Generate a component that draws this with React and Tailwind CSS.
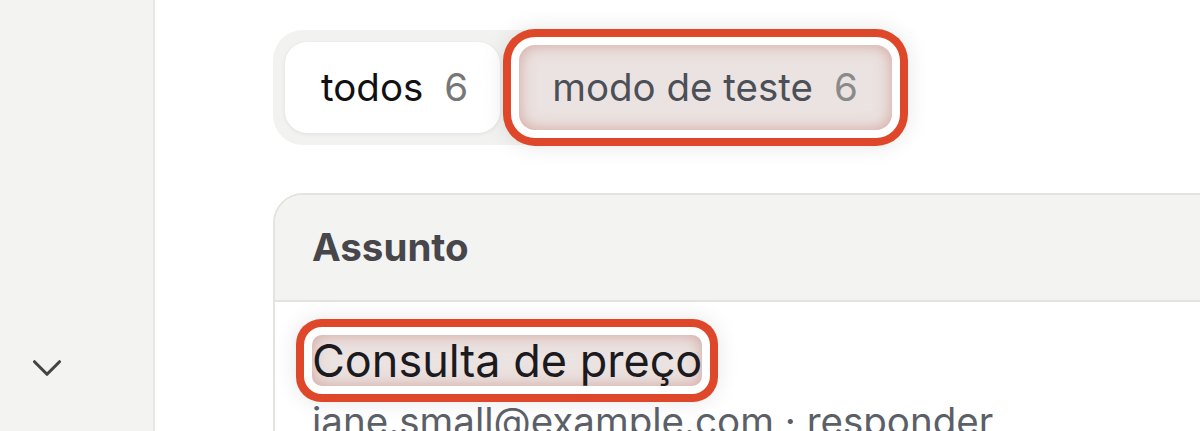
import { ChevronDown } from 'lucide-react';

const font = { fontFamily: 'Inter, "Noto Sans", sans-serif' };

// annotation look: white gap, red ring, soft outer shadow, reddish inner glow
const mark =
  'bg-[#ebe3e1] shadow-[inset_0_0_16px_rgba(185,100,90,0.5),0_0_0_8px_#ffffff,0_0_0_16px_#df472a,0_0_22px_16px_rgba(0,0,0,0.10)]';

function Sidebar() {
  return (
    <aside className="w-[155px] shrink-0 bg-[#f3f3f1] border-r-2 border-[#e6e6e3] flex flex-col">
      <div className="mt-auto mb-[38px] pl-[22px]">
        <ChevronDown className="w-[50px] h-[50px] text-[#444]" strokeWidth={1.5} />
      </div>
    </aside>
  );
}

function Tabs() {
  return (
    <div className="inline-flex items-center gap-[19px] p-3 rounded-[30px] bg-[#f2f2f0]">
      <button className="h-[91px] pl-[36px] pr-[32px] rounded-[22px] bg-white shadow-[0_1px_4px_rgba(0,0,0,0.08)] flex items-center gap-[21px] text-[38.5px]">
        <span className="text-[#111]">todos</span>
        <span className="text-[#777]">6</span>
      </button>
      <button className={`h-[85px] pl-[33px] pr-[34px] rounded-[16px] flex items-center gap-[21px] text-[38.5px] ${mark}`}>
        <span className="text-[#4b5058]">modo de teste</span>
        <span className="text-[#8a8a8a]">6</span>
      </button>
    </div>
  );
}

export default function App() {
  return (
    <div className="w-[1200px] h-[431px] overflow-hidden flex bg-white" style={font}>
      <Sidebar />
      <main className="flex-1 pl-[118px] pt-[30px] min-w-0">
        <Tabs />
        <div className="mt-[48px] w-[1000px] rounded-tl-[30px] border-2 border-[#e3e3e0] overflow-hidden">
          <div className="h-[107px] bg-[#f3f3f1] border-b-2 border-[#e3e3e0] flex items-center px-[37px]">
            <span className="text-[38.5px] font-bold text-[#46464b]">Assunto</span>
          </div>
          <div className="px-[37px] pt-[33px]">
            <div>
              <span className={`inline-block text-[45px] leading-[51px] text-[#1b1b1f] rounded-[10px] ${mark}`}>
                Consulta de preço
              </span>
            </div>
            <div className="mt-[13px] text-[38.5px] leading-[44px] text-[#5b6068] whitespace-nowrap">
              jane.small@example.com · responder
            </div>
          </div>
        </div>
      </main>
    </div>
  );
}
